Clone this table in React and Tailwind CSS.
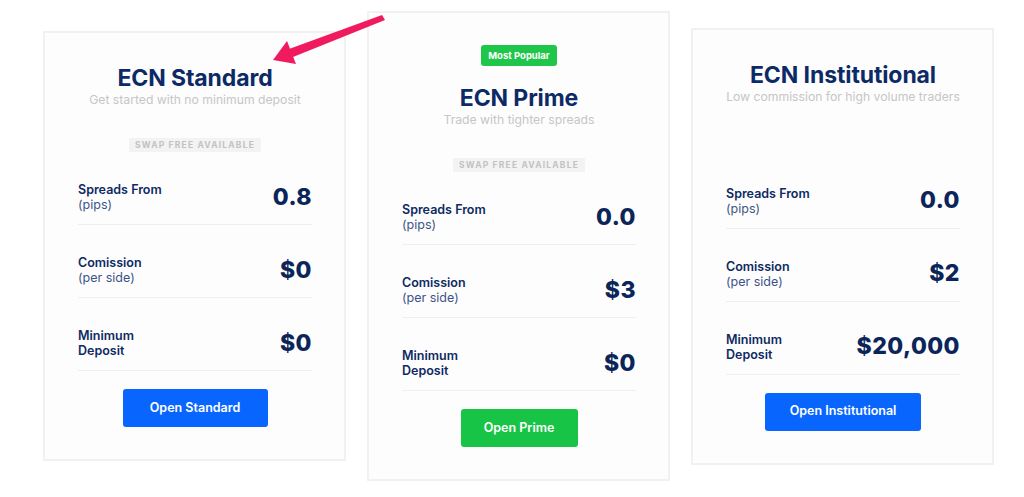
const plans = [
  {
    name: 'ECN Standard',
    tagline: 'Get started with no minimum deposit',
    swapFree: true,
    spread: '0.8',
    commission: '$0',
    deposit: '$0',
    cta: 'Open Standard',
    btn: 'w-[145px] bg-[#0866ff]',
  },
  {
    name: 'ECN Prime',
    tagline: 'Trade with tighter spreads',
    popular: true,
    swapFree: true,
    spread: '0.0',
    commission: '$3',
    deposit: '$0',
    cta: 'Open Prime',
    btn: 'w-[117px] bg-[#17c445]',
  },
  {
    name: 'ECN Institutional',
    tagline: 'Low commission for high volume traders',
    swapFree: false,
    spread: '0.0',
    commission: '$2',
    deposit: '$20,000',
    cta: 'Open Institutional',
    btn: 'w-[156px] bg-[#0866ff]',
  },
];

const Row = ({ top, bottom, value }) => (
  <div className="flex items-center justify-between pt-[30px] pb-[12px] border-b-[1.5px] border-[#efefef]">
    <div className="text-[12.5px] leading-[15px]">
      <div className="font-semibold text-[#0e2a63]">{top}</div>
      <div className={bottom.startsWith('(') ? 'text-[#3d5488]' : 'font-semibold text-[#0e2a63]'}>{bottom}</div>
    </div>
    <div className="text-[23px] leading-none font-extrabold tracking-[0.02em] text-[#0b2559]">{value}</div>
  </div>
);

const PlanCard = ({ plan }) => (
  <div className="w-[303px] shrink-0 border-2 border-[#f1f1f1] bg-[#fdfdfd] pt-[31px] pb-[32px] pl-[33px] pr-[32px] flex flex-col">
    {plan.popular && (
      <div className="self-center mb-[18px] mt-px h-[21px] px-[7px] rounded-[3px] bg-[#1fc64a] text-white text-[9.5px] font-bold leading-[21px]">
        Most Popular
      </div>
    )}
    <h2 className="text-center text-[23px] leading-[28px] font-bold tracking-[-0.1px] text-[#0c2a66]">{plan.name}</h2>
    <p className="text-center text-[12.2px] leading-[16px] whitespace-nowrap -mx-2 text-[#c6c6c6]">{plan.tagline}</p>
    {plan.swapFree ? (
      <div className="self-center mt-[30px] h-[14px] px-[6px] bg-[#f3f3f3] text-[8.5px] leading-[14px] font-bold tracking-[0.14em] text-[#c2c2c2]">
        SWAP FREE AVAILABLE
      </div>
    ) : (
      <div className="mt-[30px] h-[21px]" />
    )}
    <Row top="Spreads From" bottom="(pips)" value={plan.spread} />
    <Row top="Comission" bottom="(per side)" value={plan.commission} />
    <Row top="Minimum" bottom="Deposit" value={plan.deposit} />
    <button className={`self-center mt-[18px] h-[38px] rounded-[3px] text-white text-[12.5px] font-semibold ${plan.btn}`}>
      {plan.cta}
    </button>
  </div>
);

const App = () => {
  return (
    <div className="relative w-[1024px] h-[497px] bg-white overflow-hidden" style={{ fontFamily: 'Inter, "Noto Sans", sans-serif' }}>
      <div className="h-[492px] flex items-center gap-[21px] pl-[43px]">
        {plans.map(plan => (
          <PlanCard key={plan.name} plan={plan} />
        ))}
      </div>
      {/* annotation arrow */}
      <svg className="absolute inset-0 pointer-events-none" width="1024" height="497" viewBox="0 0 1024 497">
        <polygon points="382,15 385,20 293,57 289,49" fill="#f01a5e" />
        <polygon points="273,60 287,41 296,64" fill="#f01a5e" />
      </svg>
    </div>
  );
};

export default App;
